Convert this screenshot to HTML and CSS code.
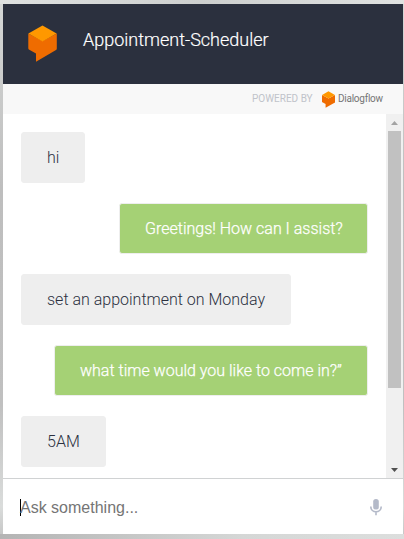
FILE: index.html
```html
<!DOCTYPE html>
<html lang="en">
<head>
<meta charset="utf-8">
<title>Appointment-Scheduler</title>
<link rel="stylesheet" href="styles.css">
</head>
<body>
<main class="agent">
  <header class="header">
    <svg class="logo" viewBox="0 0 29 37">
      <path fill="#ef6c00" d="M.3 8.500 14.500 16 28.800 8.500V23.500Q28.800 24.500 28 25L8 36.800V28.500L1.300 24.800Q.3 24.300 .3 23.300Z"/>
      <path fill="#ff9800" d="M14.500 .5 28.600 8.400 14.500 16.400 .4 8.400Z"/>
    </svg>
    <h1 class="title">Appointment-Scheduler</h1>
  </header>
  <div class="powered">
    <span class="powered-label">POWERED BY</span>
    <svg class="powered-logo" viewBox="0 0 29 37">
      <path fill="#ef6c00" d="M0 8.500 14.500 16 29 8.500V24.500Q29 25.500 28 26L8 37V28.500L1 24.800Q0 24.300 0 23.300Z"/>
      <path fill="#ff9800" d="M14.500 .3 28.800 8.200 14.500 16.200 .2 8.200Z"/>
    </svg>
    <span class="powered-name">Dialogflow</span>
  </div>
  <div class="chat">
    <div class="messages">
      <div class="bubble user w-hi">hi</div>
      <div class="bubble bot w-greet">Greetings! How can I assist?</div>
      <div class="bubble user w-set">set an appointment on Monday</div>
      <div class="bubble bot w-time">what time would you like to come in?”</div>
      <div class="bubble user w-5am">5AM</div>
    </div>
    <div class="scrollbar">
      <svg class="arrow" viewBox="0 0 17 17"><path fill="#a3a3a3" d="M5 11 8.500 7 12 11Z"/></svg>
      <div class="thumb"></div>
      <svg class="arrow" viewBox="0 0 17 17"><path fill="#505050" d="M5 7H12L8.500 11Z"/></svg>
    </div>
  </div>
  <footer class="ask">
    <span class="caret"></span>
    <span class="placeholder">Ask something...</span>
    <svg class="mic" viewBox="0 0 12 17">
      <rect x="3.200" y="0" width="5.600" height="10.500" rx="2.600" fill="#b4bac9"/>
      <path d="M.8 7.500C.8 14.500 11.200 14.500 11.200 7.500M6 12.700V16.300" fill="none" stroke="#b4bac9" stroke-width="1.600"/>
    </svg>
  </footer>
</main>
</body>
</html>
```
FILE: styles.css
```css
* { box-sizing: border-box; }
body {
  margin: 0;
  height: 539px;
  padding: 4px 1px 5px 3px;
  overflow: hidden;
  font-family: Roboto, sans-serif;
  background:
    linear-gradient(90deg, #b4b4b4, #d5d7d6 60%, #dcdedd) 0 100% / 100% 5px no-repeat,
    linear-gradient(90deg, #dfe1e0, #cdcfce 50%, #e0e2e1) 0 0 / 100% 4px no-repeat,
    linear-gradient(#d5d7d6, #bebebe 35%, #c0c0c0 75%, #dadcdb 94%, #c4c4c4);
}
.agent { display: flex; flex-direction: column; width: 400px; height: 530px; background: #fff; }
.header { display: flex; height: 80px; padding: 21px 0 0 25px; background: #2b303e; }
.logo { width: 29px; height: 37px; }
.title { margin: 3px 0 0 26px; font-size: 18px; line-height: 24px; font-weight: 300; color: #fff; -webkit-text-stroke: .2px #fff; white-space: nowrap; }
.powered { display: flex; align-items: center; height: 30px; padding-left: 249px; background: #f8f8f8; white-space: nowrap; }
.powered-label { width: 61px; font-size: 10px; line-height: 14px; color: #c0c3ca; }
.powered-logo { width: 13px; height: 17px; margin-left: 9px; }
.powered-name { margin-left: 3px; font-size: 10px; line-height: 14px; letter-spacing: -.25px; color: #757575; }
.chat { display: flex; height: 364px; }
.messages { display: flex; flex-direction: column; gap: 20px; width: 383px; padding: 18px 18px 0; }
.bubble { height: 51px; padding: 0 25px; border: 1px solid #eee; border-radius: 3px; font-size: 16px; line-height: 49px; font-weight: 300; color: #2b303e; white-space: nowrap; }
.user { align-self: flex-start; background: #eee; }
.bot { align-self: flex-end; background: #a5d175; color: #fff; -webkit-text-stroke: .25px #fff; }
.w-hi { width: 64px; }
.w-greet { width: 249px; }
.w-set { width: 270px; }
.w-time { width: 314px; }
.w-5am { width: 85px; }
.scrollbar { display: flex; flex-direction: column; width: 17px; background: #f0f0f0; }
.arrow { width: 17px; height: 17px; flex: none; }
.thumb { height: 257px; margin: 0 2px 73px; background: #c1c1c1; }
.ask { display: flex; align-items: center; height: 56px; padding: 0 21px 0 17px; border-top: 1px solid #d0d2d3; }
.caret { width: 1px; height: 17px; margin: 2px -1px 0 0; background: #000; }
.placeholder { flex: 1; margin-top: 2px; font: 16px/20px "Liberation Sans", Arial, sans-serif; color: #757575; }
.mic { width: 12px; height: 17px; margin-top: 1px; }
```
